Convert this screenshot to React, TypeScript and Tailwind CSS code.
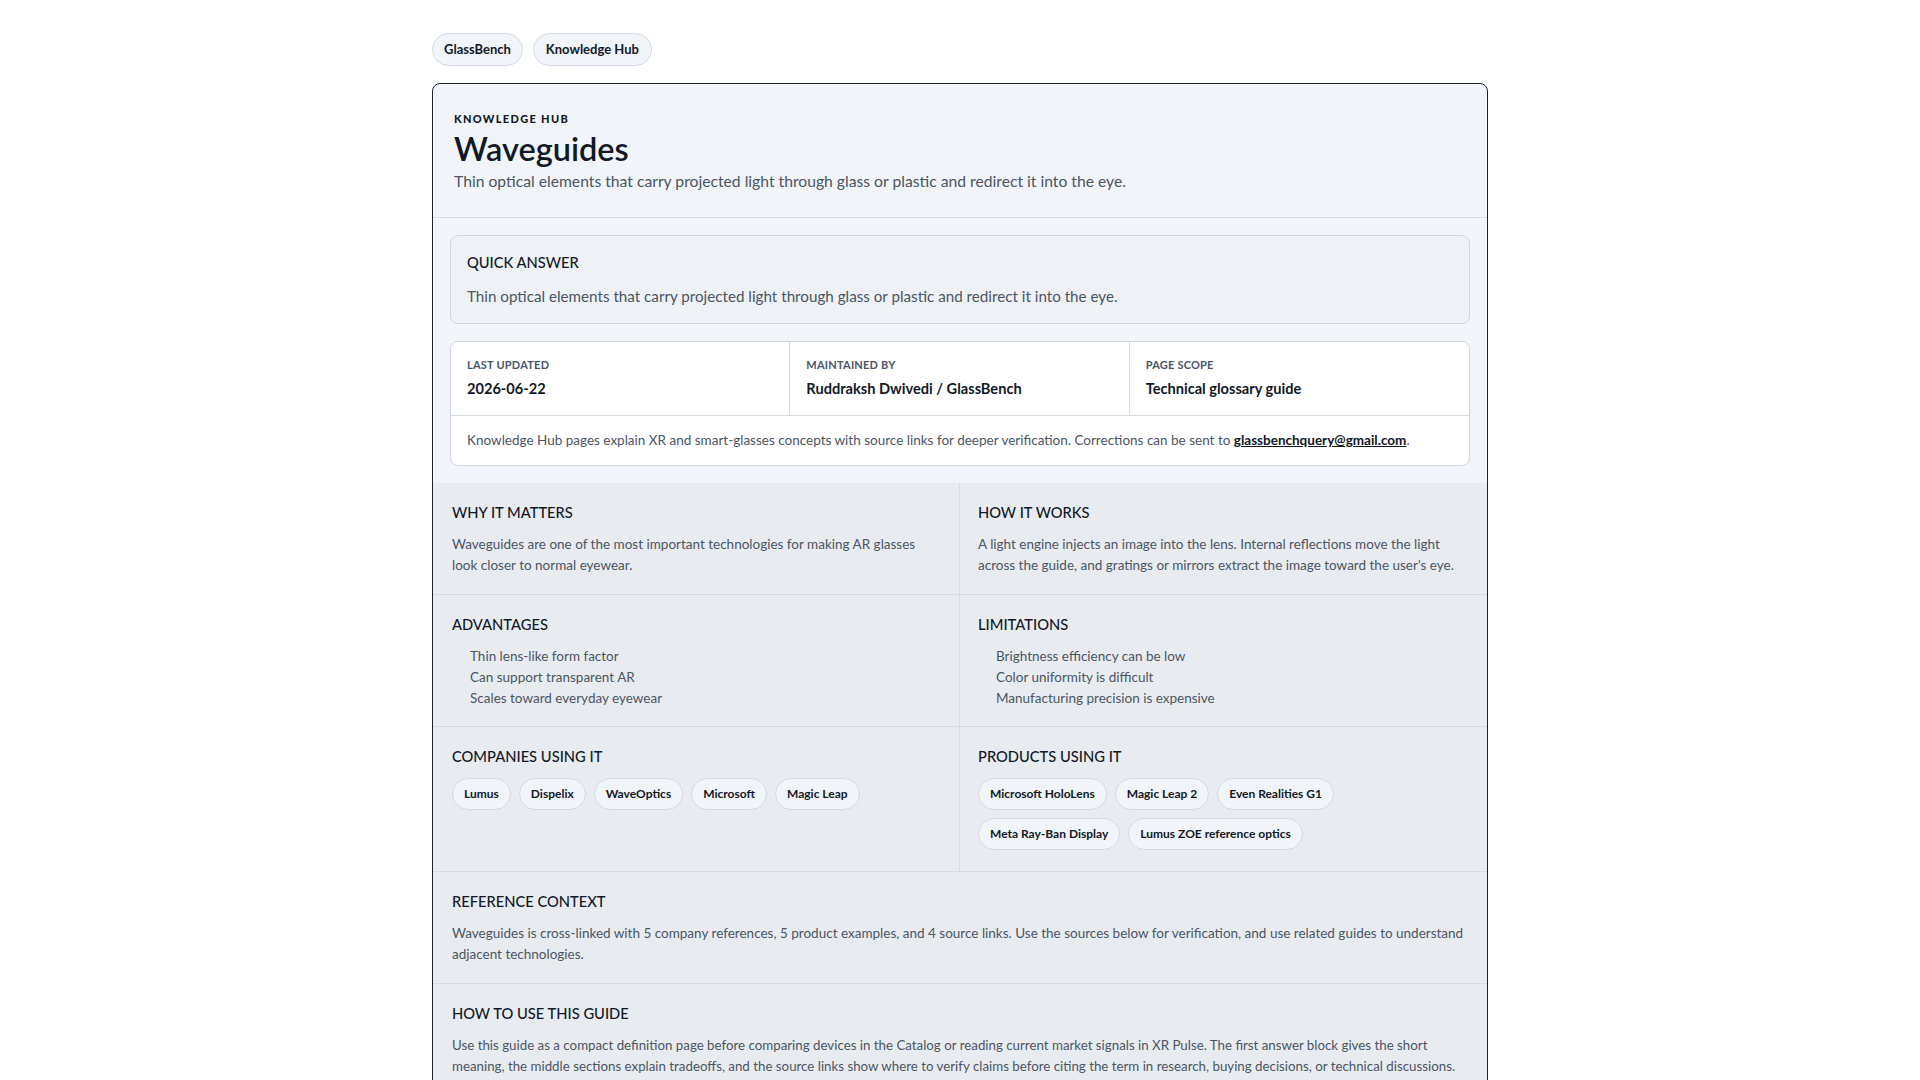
import React from 'react';

const companies = ['Lumus', 'Dispelix', 'WaveOptics', 'Microsoft', 'Magic Leap'];
const products = ['Microsoft HoloLens', 'Magic Leap 2', 'Even Realities G1', 'Meta Ray-Ban Display', 'Lumus ZOE reference optics'];

const SectionTitle: React.FC<{ children: React.ReactNode }> = ({ children }) => (
  <h2 className="text-[14.7px] leading-[18px] font-medium text-[#111827] uppercase">{children}</h2>
);

const Chip: React.FC<{ label: string }> = ({ label }) => (
  <span className="h-[32px] px-[11px] inline-flex items-center rounded-full border border-[#d3d9e1] bg-[#f1f4f8] text-[12px] font-bold text-[#111827]">
    {label}
  </span>
);

const MetaCell: React.FC<{ label: string; value: string; last?: boolean }> = ({ label, value, last }) => (
  <div className={`px-4 pt-4 pb-[17px] ${last ? '' : 'border-r border-[#d5dbe3]'}`}>
    <div className="text-[11px] leading-[14px] font-bold text-[#475569] uppercase tracking-[0.02em]">{label}</div>
    <div className="mt-2 text-[14.6px] leading-[18px] font-bold text-[#111827]">{value}</div>
  </div>
);

export default function App() {
  return (
    <div className="min-h-screen bg-white font-['Lato',sans-serif] text-[#111827]">
      <div className="w-[1056px] mx-auto pt-[33px] pb-10">
        <nav className="flex gap-[10px] mb-[17px]">
          <span className="h-[33px] px-[11px] inline-flex items-center rounded-full border border-[#d3d9e1] bg-[#f1f4f8] text-[13px] font-bold">GlassBench</span>
          <span className="h-[33px] px-[12px] inline-flex items-center rounded-full border border-[#d3d9e1] bg-[#f1f4f8] text-[13px] font-bold">Knowledge Hub</span>
        </nav>

        <article className="border border-[#1f2329] rounded-lg overflow-hidden bg-[#f1f4f8]">
          <header className="px-[21px] pt-[28px] pb-[26px] border-b border-[#d5dbe3]">
            <div className="text-[11px] leading-[14px] font-black tracking-[0.12em] uppercase">Knowledge Hub</div>
            <h1 className="mt-[5px] text-[32.5px] leading-[36px] font-semibold">Waveguides</h1>
            <p className="mt-[4px] text-[15.7px] leading-[20px] text-[#4b5563]">
              Thin optical elements that carry projected light through glass or plastic and redirect it into the eye.
            </p>
          </header>

          <div className="p-[17px] flex flex-col gap-[17px]">
            <section className="rounded-lg border border-[#cfd6de] bg-[#eef2f6] px-4 pt-[17px] pb-[17px]">
              <h2 className="text-[14.7px] leading-[18px] font-medium uppercase">Quick Answer</h2>
              <p className="mt-[15px] text-[15.2px] leading-[20px] text-[#4b5563]">
                Thin optical elements that carry projected light through glass or plastic and redirect it into the eye.
              </p>
            </section>

            <section className="rounded-lg border border-[#cfd6de] bg-white">
              <div className="grid grid-cols-3 border-b border-[#d5dbe3]">
                <MetaCell label="Last updated" value="2026-06-22" />
                <MetaCell label="Maintained by" value="Ruddraksh Dwivedi / GlassBench" />
                <MetaCell label="Page scope" value="Technical glossary guide" last />
              </div>
              <p className="px-4 h-[49px] flex items-center text-[13.5px] text-[#4b5563]">
                <span>
                  Knowledge Hub pages explain XR and smart-glasses concepts with source links for deeper verification. Corrections can be sent to{' '}
                  <a href="#" className="font-bold text-[#111827] underline">glassbenchquery@gmail.com</a>.
                </span>
              </p>
            </section>
          </div>

          <div className="bg-[#e8ecf1] grid grid-cols-2">
            <section className="px-[19px] pt-5 pb-[18px] border-r border-b border-[#d5dbe3]">
              <SectionTitle>Why it matters</SectionTitle>
              <p className="mt-[13px] text-[13.5px] leading-[21px] text-[#4b5563]">
                Waveguides are one of the most important technologies for making AR glasses look closer to normal eyewear.
              </p>
            </section>
            <section className="px-[18px] pt-5 pb-[18px] border-b border-[#d5dbe3]">
              <SectionTitle>How it works</SectionTitle>
              <p className="mt-[13px] text-[13.5px] leading-[21px] text-[#4b5563]">
                A light engine injects an image into the lens. Internal reflections move the light across the guide, and gratings or mirrors extract the image toward the user's eye.
              </p>
            </section>

            <section className="px-[19px] pt-5 pb-[17px] border-r border-b border-[#d5dbe3]">
              <SectionTitle>Advantages</SectionTitle>
              <ul className="mt-[13px] pl-[18px] text-[13.5px] leading-[21px] text-[#4b5563]">
                <li>Thin lens-like form factor</li>
                <li>Can support transparent AR</li>
                <li>Scales toward everyday eyewear</li>
              </ul>
            </section>
            <section className="px-[18px] pt-5 pb-[17px] border-b border-[#d5dbe3]">
              <SectionTitle>Limitations</SectionTitle>
              <ul className="mt-[13px] pl-[18px] text-[13.5px] leading-[21px] text-[#4b5563]">
                <li>Brightness efficiency can be low</li>
                <li>Color uniformity is difficult</li>
                <li>Manufacturing precision is expensive</li>
              </ul>
            </section>

            <section className="px-[19px] pt-5 pb-[21px] border-r border-b border-[#d5dbe3]">
              <SectionTitle>Companies using it</SectionTitle>
              <div className="mt-[13px] flex flex-wrap gap-2">
                {companies.map((c) => (
                  <Chip key={c} label={c} />
                ))}
              </div>
            </section>
            <section className="px-[18px] pt-5 pb-[21px] border-b border-[#d5dbe3]">
              <SectionTitle>Products using it</SectionTitle>
              <div className="mt-[13px] flex flex-wrap gap-2">
                {products.map((p) => (
                  <Chip key={p} label={p} />
                ))}
              </div>
            </section>

            <section className="col-span-2 px-[19px] pt-5 pb-[18px] border-b border-[#d5dbe3]">
              <SectionTitle>Reference context</SectionTitle>
              <p className="mt-[13px] text-[13.5px] leading-[21px] text-[#4b5563]">
                Waveguides is cross-linked with 5 company references, 5 product examples, and 4 source links. Use the sources below for verification, and use related guides to understand adjacent technologies.
              </p>
            </section>

            <section className="col-span-2 pl-[19px] pr-[14px] pt-5 pb-[18px]">
              <SectionTitle>How to use this guide</SectionTitle>
              <p className="mt-[13px] text-[13.3px] leading-[21px] text-[#4b5563]">
                Use this guide as a compact definition page before comparing devices in the Catalog or reading current market signals in XR Pulse. The first answer block gives the short meaning, the middle sections explain tradeoffs, and the source links show where to verify claims before citing the term in research, buying decisions, or technical discussions.
              </p>
            </section>
          </div>
        </article>
      </div>
    </div>
  );
}
